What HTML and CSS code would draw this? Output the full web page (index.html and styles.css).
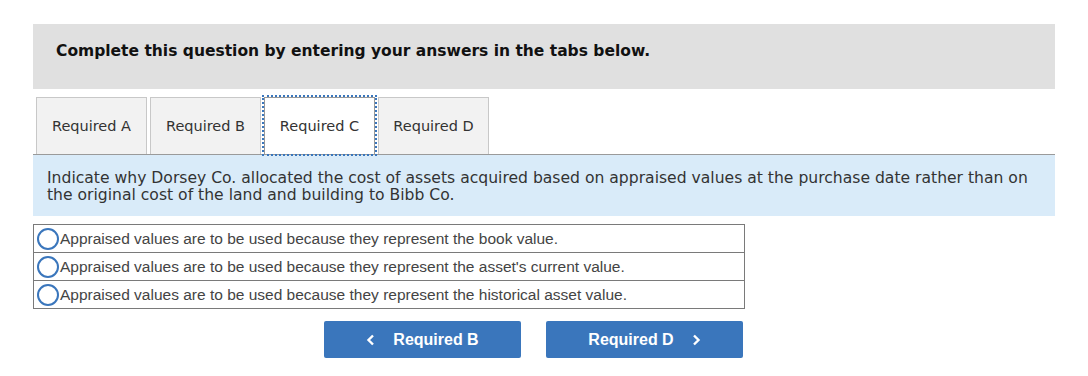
FILE: index.html
```html
<!doctype html>
<html>
  <head>
    <title>Required C</title>
    <meta name="viewport" content="width=device-width">
    <link rel="stylesheet" href="styles.css">
  </head>
  <body>
    <div id="question">
      <div class="banner">
        <p>Complete this question by entering your answers in the tabs below.</p>
      </div>

      <ul class="tabs">
        <li class="tab">Required A</li>
        <li class="tab">Required B</li>
        <li class="tab current">Required C</li>
        <li class="tab">Required D</li>
      </ul>

      <div class="prompt">
        Indicate why Dorsey Co. allocated the cost of assets acquired based on appraised values at the purchase date rather than on
        the original cost of the land and building to Bibb Co.
      </div>

      <table class="choices">
        <tr>
          <td><span class="radio"></span>Appraised values are to be used because they represent the book value.</td>
        </tr>
        <tr>
          <td><span class="radio"></span>Appraised values are to be used because they represent the asset's current value.</td>
        </tr>
        <tr>
          <td><span class="radio"></span>Appraised values are to be used because they represent the historical asset value.</td>
        </tr>
      </table>

      <div class="nav">
        <button class="btn prev">
          <svg class="chev" width="9" height="12" viewBox="0 0 9 12"><path d="M7 1.5 L2.5 6 L7 10.5" fill="none" stroke="#fff" stroke-width="2.4"/></svg>
          Required B
        </button>
        <button class="btn next">
          Required D
          <svg class="chev" width="9" height="12" viewBox="0 0 9 12"><path d="M2 1.5 L6.5 6 L2 10.5" fill="none" stroke="#fff" stroke-width="2.4"/></svg>
        </button>
      </div>
    </div>
  </body>
</html>
```

FILE: styles.css
```css
      html, body {
        margin: 0;
        padding: 0;
        background: #fff;
      }
      #question {
        width: 1022px;
        padding: 24px 0 0 33px;
        font-family: "DejaVu Sans", Verdana, sans-serif;
        color: #222;
      }
      .banner {
        background: #e0e0e0;
        height: 65px;
        padding: 0 23px;
        display: flex;
        align-items: center;
      }
      .banner p {
        margin: 0 0 12px 0;
        font-size: 15.5px;
        font-weight: bold;
        color: #111;
      }

      .tabs {
        list-style-type: none;
        margin: 8px 0 0 0;
        padding: 0 0 0 3px;
        display: flex;
        gap: 3px;
        border-bottom: 1px solid #9a9a9a;
      }
      .tab {
        box-sizing: border-box;
        width: 111px;
        height: 57px;
        border: 1px solid #c8c8c8;
        border-bottom: none;
        background: #f2f2f2;
        font-size: 14.5px;
        color: #333;
        display: flex;
        align-items: center;
        justify-content: center;
      }
      .tab.current {
        background: #fff;
        border-color: #999;
        outline: 2px dotted #3a76bc;
        outline-offset: 0;
      }

      .prompt {
        background: #d9ebf9;
        height: 61px;
        box-sizing: border-box;
        padding: 15px 10px 0 14px;
        font-size: 15.6px;
        line-height: 17px;
        color: #333;
      }

      .choices {
        margin-top: 8px;
        width: 712px;
        border-collapse: collapse;
        font-family: "Liberation Sans", Arial, sans-serif;
        font-size: 15.5px;
        color: #444;
      }
      .choices td {
        border: 1px solid #7a7a7a;
        height: 28px;
        padding: 1px 0 0 3px;
        box-sizing: border-box;
      }
      .radio {
        display: inline-block;
        width: 18px;
        height: 18px;
        border: 2px solid #3a76bc;
        border-radius: 50%;
        vertical-align: -6px;
        margin-right: 1px;
      }

      .nav {
        display: flex;
        gap: 25px;
        padding: 12px 0 0 291px;
      }
      .btn {
        width: 197px;
        height: 37px;
        border: none;
        border-radius: 2px;
        background: #3a76bc;
        color: #fff;
        font-family: "Liberation Sans", Arial, sans-serif;
        font-size: 16px;
        font-weight: bold;
        display: flex;
        align-items: center;
        justify-content: center;
      }
      .prev .chev {
        margin-right: 18px;
      }
      .next .chev {
        margin-left: 18px;
      }
```
